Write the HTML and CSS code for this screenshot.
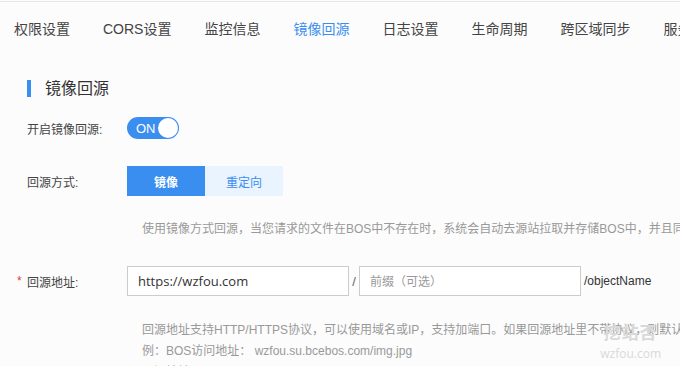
FILE: index.html
```html
<!DOCTYPE html>
<html lang="zh-CN">
<head>
  <meta charset="UTF-8" />
  <title>镜像回源</title>
  <link rel="stylesheet" href="styles.css">
</head>
<body>
  <div class="tabs">
    <span class="tab">权限设置</span>
    <span class="tab">CORS设置</span>
    <span class="tab">监控信息</span>
    <span class="tab active">镜像回源</span>
    <span class="tab">日志设置</span>
    <span class="tab">生命周期</span>
    <span class="tab">跨区域同步</span>
    <span class="tab">服务器端加密</span>
  </div>

  <div class="panel">
    <h3 class="title">镜像回源</h3>

    <div class="row row-switch">
      <label class="label">开启镜像回源:</label>
      <div class="switch">
        <span class="switch-text">ON</span>
        <span class="knob"></span>
      </div>
    </div>

    <div class="row row-mode">
      <label class="label">回源方式:</label>
      <div class="segments">
        <button class="seg on">镜像</button>
        <button class="seg">重定向</button>
      </div>
    </div>

    <p class="tip tip-mode">使用镜像方式回源，当您请求的文件在BOS中不存在时，系统会自动去源站拉取并存储BOS中，并且同时返回给用户。</p>

    <div class="row row-addr">
      <label class="label"><span class="req">*</span>回源地址:</label>
      <input class="field" type="text" value="https://wzfou.com" />
      <span class="slash">/</span>
      <input class="field" type="text" placeholder="前缀（可选）" />
      <span class="suffix">/objectName</span>
    </div>

    <div class="tip tip-addr">
      <p>回源地址支持HTTP/HTTPS协议，可以使用域名或IP，支持加端口。如果回源地址里不带协议，则默认使用HTTP协议。</p>
      <p>例：BOS访问地址： wzfou.su.bcebos.com/img.jpg</p>
      <p>回源地址：</p>
    </div>
  </div>

  <div class="mark">
    <div class="mark-cn">挖站否</div>
    <div class="mark-en">wzfou.com</div>
  </div>
</body>
</html>
```

FILE: styles.css
```css
* {
  box-sizing: border-box;
}

body {
  margin: 0;
  padding-top: 1px;
  height: 366px;
  overflow: hidden;
  position: relative;
  background: #fcfcfc;
  font-family: "Liberation Sans", "Noto Sans CJK SC", sans-serif;
  color: #333;
}

.tabs {
  display: flex;
  gap: 33px;
  height: 53px;
  align-items: center;
  padding-left: 14px;
  border-top: 1px solid #e6e6e6;
  white-space: nowrap;
  font-size: 14px;
}

.tab {
  color: #444;
}

.tab.active {
  color: #3a8ef0;
}

.panel {
  padding-left: 27px;
}

.title {
  margin: 26px 0 0;
  height: 17px;
  line-height: 17px;
  font-size: 16px;
  font-weight: normal;
  color: #333;
  border-left: 4px solid #3a8ef0;
  padding-left: 14px;
}

.row {
  display: flex;
  align-items: center;
  white-space: nowrap;
}

.label {
  width: 100px;
  font-size: 12px;
  color: #444;
  position: relative;
}

.req {
  position: absolute;
  left: -10px;
  top: 1px;
  color: #e4393c;
}

.row-switch {
  margin-top: 20px;
}

.switch {
  width: 52px;
  height: 22px;
  border-radius: 11px;
  background: #3a8ef0;
  display: flex;
  align-items: center;
  justify-content: space-between;
  padding: 0 1px 0 9px;
}

.switch-text {
  color: #fff;
  font-size: 13px;
}

.knob {
  width: 20px;
  height: 20px;
  border-radius: 50%;
  background: #fff;
}

.row-mode {
  margin-top: 27px;
}

.segments {
  display: flex;
}

.seg {
  width: 78px;
  height: 30px;
  border: none;
  margin: 0;
  padding: 0;
  font-family: inherit;
  font-size: 12px;
  background: #eaf4fe;
  color: #3a8ef0;
}

.seg.on {
  background: #3a8ef0;
  color: #fff;
  font-weight: bold;
}

.tip {
  margin: 0;
  padding-left: 115px;
  font-size: 12px;
  color: #999;
  white-space: nowrap;
}

.tip-mode {
  margin-top: 23px;
  line-height: 20px;
}

.row-addr {
  margin-top: 27px;
}

.field {
  width: 222px;
  height: 30px;
  border: 1px solid #ccc;
  background: #fff;
  padding: 0 10px;
  font-family: "Open Sans", "Noto Sans CJK SC", sans-serif;
  font-size: 13px;
  color: #333;
  outline: none;
}

.field::placeholder {
  color: #999;
  font-family: "Noto Sans CJK SC", sans-serif;
  font-size: 12px;
}

.slash {
  width: 10px;
  text-align: center;
  font-size: 13px;
  color: #666;
}

.suffix {
  padding-left: 3px;
  font-size: 12px;
  color: #333;
}

.tip-addr {
  margin-top: 24px;
  line-height: 21px;
}

.tip-addr p {
  margin: 0;
}

.mark {
  position: absolute;
  right: 19px;
  bottom: 5px;
  text-align: center;
  color: #d9d9d9;
}

.mark-cn {
  font-size: 17px;
  font-weight: bold;
  line-height: 20px;
  letter-spacing: 1px;
  margin-bottom: 3px;
}

.mark-en {
  font-family: "Open Sans", sans-serif;
  font-size: 12px;
  line-height: 14px;
}
```
